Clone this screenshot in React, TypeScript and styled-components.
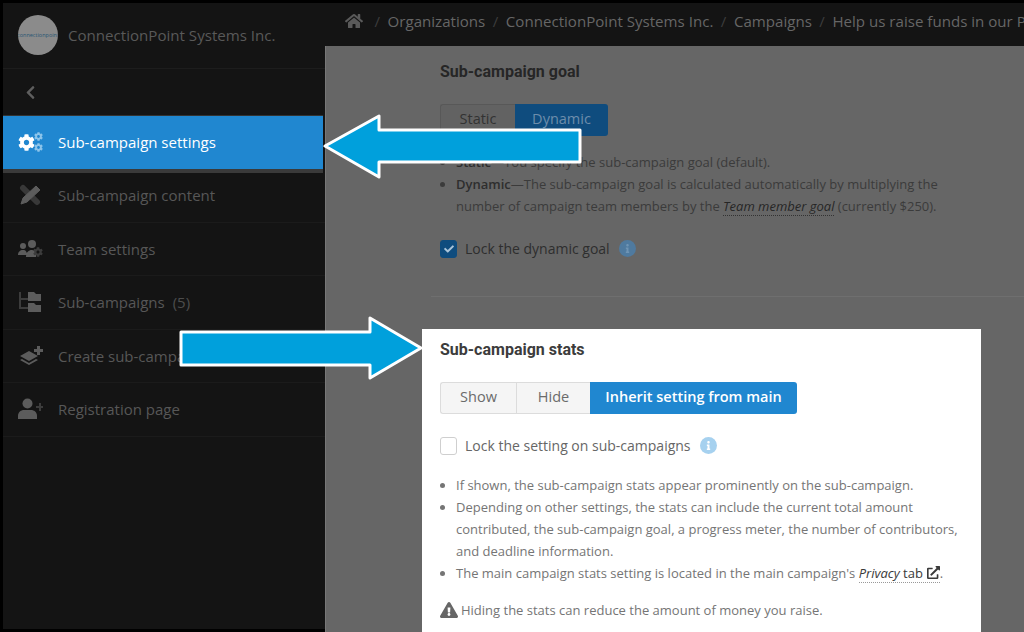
import React, { FC } from 'react';
import styled, { createGlobalStyle } from 'styled-components';
import { FaHome, FaExclamationTriangle, FaExternalLinkAlt, FaCheck, FaInfo, FaChevronLeft } from 'react-icons/fa';

const GlobalStyle = createGlobalStyle`
    html, body {
        margin: 0;
        padding: 0;
        background: #000;
    }
    body {
        font-family: "Open Sans", "Liberation Sans", sans-serif;
    }
`;

const Page = styled.div`
    position: relative;
    display: flex;
    width: 1024px;
    height: 632px;
    box-sizing: border-box;
    padding-top: 3px;
    overflow: hidden;
    background: #000;
`;

const Sidebar = styled.aside`
    width: 322px;
    margin-left: 3px;
    margin-bottom: 3px;
    background: #141414;
    flex-shrink: 0;
`;

const Brand = styled.div`
    display: flex;
    align-items: center;
    gap: 10px;
    height: 66px;
    padding: 0 0 1px 15px;
    box-sizing: border-box;
    border-bottom: 1px solid #1d1d1d;
    color: #595959;
    font-size: 15.1px;
`;

const Logo = styled.div`
    display: flex;
    align-items: center;
    justify-content: center;
    width: 40px;
    height: 40px;
    border-radius: 50%;
    background: #8b8b8b;
    color: #2a5674;
    font-size: 5.5px;
    white-space: nowrap;
    overflow: hidden;
`;

const BackRow = styled.div`
    display: flex;
    align-items: center;
    height: 47px;
    padding-left: 20px;
    color: #5e5e5e;
    font-size: 15px;
`;

const NavItem = styled.div<{ $active?: boolean }>`
    display: flex;
    align-items: center;
    gap: 15px;
    height: ${({ $active }) => ($active ? '53px' : '53.5px')};
    box-sizing: border-box;
    padding-left: 15px;
    padding-bottom: ${({ $active }) => ($active ? '2px' : '0')};
    margin-right: ${({ $active }) => ($active ? '2px' : '0')};
    font-size: 15px;
    color: ${({ $active }) => ($active ? '#fff' : '#575757')};
    background: ${({ $active }) => ($active ? '#2087d0' : 'transparent')};
    border-bottom: ${({ $active }) => ($active ? '0' : '1px solid #1b1b1b')};
    box-shadow: ${({ $active }) => ($active ? '0 4px 0 #3a3a3a, 0 -1px 0 #333' : 'none')};
`;

const Count = styled.span`
    margin-left: 8px;
    color: #4d4d4d;
`;

const IconBox = styled.svg`
    width: 25px;
    height: 22px;
    flex-shrink: 0;
`;

const Main = styled.main`
    flex: 1;
    display: flex;
    flex-direction: column;
    min-width: 0;
`;

const Breadcrumbs = styled.nav`
    display: flex;
    align-items: center;
    flex-shrink: 0;
    height: 43px;
    box-sizing: border-box;
    padding: 0 0 8px 20px;
    background: #141414;
    color: #666;
    font-size: 15.1px;
    white-space: nowrap;
    overflow: hidden;
    svg {
        flex-shrink: 0;
        font-size: 18px;
        margin-right: 4px;
        color: #5a5a5a;
    }
`;

const Slash = styled.span`
    margin: 0 7.5px;
    color: #3d3d3d;
`;

const Content = styled.div`
    flex: 1;
    display: flex;
    flex-direction: column;
    min-height: 0;
    background: #666;
    border-left: 1px solid #777;
`;

const Dimmed = styled.section`
    height: 251px;
    box-sizing: border-box;
    margin-left: 105px;
    padding: 15px 0 0 9px;
    border-bottom: 1px solid #6f6f6f;
`;

const Card = styled.section`
    flex: 1;
    width: 559px;
    margin-top: 32px;
    margin-left: 96px;
    padding: 10px 18px 0;
    box-sizing: border-box;
    background: #fff;
`;

const Heading = styled.h3<{ $dim?: boolean }>`
    margin: 0;
    font-family: Roboto, "Liberation Sans", sans-serif;
    font-size: 16px;
    font-weight: 700;
    line-height: 22px;
    color: ${({ $dim }) => ($dim ? '#262626' : '#3c3c3c')};
`;

const Toggle = styled.div`
    display: flex;
    margin-top: 21px;
`;

const ToggleButton = styled.div<{ $on?: boolean; $dim?: boolean; $w: number }>`
    display: flex;
    align-items: center;
    justify-content: center;
    width: ${({ $w }) => $w}px;
    height: 32px;
    box-sizing: border-box;
    padding-bottom: 3px;
    font-size: 14.5px;
    font-weight: ${({ $on, $dim }) => ($on && !$dim ? 600 : 400)};
    color: ${({ $on, $dim }) => ($on ? ($dim ? '#6d8dab' : '#fff') : $dim ? '#333' : '#6b6b6b')};
    background: ${({ $on, $dim }) => ($on ? ($dim ? '#0f4c7e' : '#2087d0') : $dim ? '#626262' : '#f5f5f5')};
    border: 1px solid ${({ $on, $dim }) => ($on ? 'transparent' : $dim ? '#585858' : '#dcdcdc')};
    border-right-width: ${({ $on }) => ($on ? '1px' : '0')};
    &:first-child {
        border-radius: 3px 0 0 3px;
    }
    &:last-child {
        border-radius: 0 3px 3px 0;
    }
`;

const Bullets = styled.ul<{ $dim?: boolean; $top: number }>`
    margin: ${({ $top }) => $top}px 0 0;
    padding: 0 0 0 16px;
    max-width: 507px;
    font-size: 13px;
    line-height: 22px;
    color: ${({ $dim }) => ($dim ? '#3b3b3b' : '#757575')};
`;

const Strong = styled.b`
    font-weight: 600;
    color: #2e2e2e;
`;

const Term = styled.span<{ $dim?: boolean }>`
    color: ${({ $dim }) => ($dim ? '#262626' : '#3a3a3a')};
    border-bottom: 1px dotted ${({ $dim }) => ($dim ? '#333' : '#999')};
    em {
        font-style: italic;
    }
    svg {
        font-size: 13px;
        margin-left: 4px;
        vertical-align: -1px;
    }
`;

const LockRow = styled.label<{ $dim?: boolean; $top: number }>`
    display: flex;
    align-items: center;
    gap: 8px;
    margin-top: ${({ $top }) => $top}px;
    font-size: 14px;
    color: ${({ $dim }) => ($dim ? '#2e2e2e' : '#666')};
`;

const CheckBox = styled.span<{ $on?: boolean }>`
    display: flex;
    align-items: center;
    justify-content: center;
    width: 17px;
    height: 18px;
    box-sizing: border-box;
    border-radius: 3px;
    color: #a9c4da;
    font-size: 10px;
    background: ${({ $on }) => ($on ? '#0f4c7e' : '#fff')};
    border: 1px solid ${({ $on }) => ($on ? '#0f4c7e' : '#cfcfcf')};
`;

const InfoDot = styled.span<{ $dim?: boolean }>`
    display: flex;
    align-items: center;
    justify-content: center;
    width: 17px;
    height: 17px;
    margin-left: 1px;
    border-radius: 50%;
    font-size: 9px;
    color: ${({ $dim }) => ($dim ? '#6f94b4' : '#fff')};
    background: ${({ $dim }) => ($dim ? '#4f7a9f' : '#a6d1ef')};
`;

const Warning = styled.p`
    display: flex;
    align-items: center;
    gap: 3px;
    margin: 15px 0 0;
    font-size: 13px;
    line-height: 22px;
    color: #757575;
    svg {
        font-size: 18px;
        color: #666;
    }
`;

const ArrowLayer = styled.svg`
    position: absolute;
    inset: 0;
    width: 1024px;
    height: 632px;
    pointer-events: none;
`;

const COG =
    'M487.4 315.7l-42.6-24.6c4.3-23.2 4.3-47 0-70.2l42.6-24.6c4.9-2.8 7.1-8.6 5.5-14-11.1-35.6-30-67.8-54.7-94.6-3.8-4.1-10-5.1-14.8-2.3L380.8 110c-17.9-15.4-38.5-27.3-60.8-35.1V25.8c0-5.6-3.9-10.5-9.4-11.7-36.7-8.2-74.3-7.8-109.2 0-5.5 1.2-9.4 6.1-9.4 11.7V75c-22.2 7.9-42.8 19.8-60.8 35.1L88.7 85.5c-4.9-2.8-11-1.9-14.8 2.3-24.7 26.7-43.6 58.9-54.7 94.6-1.7 5.4.6 11.2 5.5 14L67.3 221c-4.3 23.2-4.3 47 0 70.2l-42.6 24.6c-4.9 2.8-7.1 8.6-5.5 14 11.1 35.6 30 67.8 54.7 94.6 3.8 4.1 10 5.1 14.8 2.3l42.6-24.6c17.9 15.4 38.5 27.3 60.8 35.1v49.2c0 5.6 3.9 10.5 9.4 11.7 36.7 8.2 74.3 7.8 109.2 0 5.5-1.2 9.4-6.1 9.4-11.7v-49.2c22.2-7.9 42.8-19.8 60.8-35.1l42.6 24.6c4.9 2.8 11 1.9 14.8-2.3 24.7-26.7 43.6-58.9 54.7-94.6 1.5-5.5-.7-11.3-5.6-14.1zM256 336c-44.1 0-80-35.9-80-80s35.9-80 80-80 80 35.9 80 80-35.9 80-80 80z';

const Cog: FC<{ x: number; y: number; size: number; color: string }> = ({ x, y, size, color }) => (
    <path d={COG} fill={color} transform={`translate(${x} ${y}) scale(${size / 512})`} />
);

const SettingsIcon = () => (
    <IconBox viewBox="0 0 25 22">
        <Cog x={0} y={3} size={17} color="#fff" />
        <Cog x={16} y={1} size={9} color="#8cc4ea" />
        <Cog x={16} y={12} size={9} color="#8cc4ea" />
    </IconBox>
);

const ContentIcon = () => (
    <IconBox viewBox="0 0 25 22">
        <path d="M5 4l14 14" stroke="#383838" strokeWidth="6" strokeLinecap="round" />
        <path d="M18 2l4 4L9 18l-6 2 2-6z" fill="#5c5c5c" stroke="#5c5c5c" strokeWidth="1" strokeLinejoin="round" />
    </IconBox>
);

const TeamIcon = () => (
    <IconBox viewBox="0 0 25 22">
        <circle cx="5" cy="8" r="3" fill="#5c5c5c" />
        <circle cx="14" cy="6" r="4" fill="#5c5c5c" />
        <path d="M0 17c0-3 2-5 5-5s4 2 4 5zM8 19c0-4 2-7 6-7 2 0 3 1 4 2v5z" fill="#5c5c5c" />
        <Cog x={15} y={9} size={10} color="#3c3c3c" />
    </IconBox>
);

const TreeIcon = () => (
    <IconBox viewBox="0 0 25 22">
        <path d="M2 1v16h9M2 8h9" fill="none" stroke="#3c3c3c" strokeWidth="2" />
        <path d="M10 1h6l2 2h5v7H10zM10 12h6l2 2h5v7H10z" fill="#5c5c5c" />
    </IconBox>
);

const LayerPlusIcon = () => (
    <IconBox viewBox="0 0 25 22">
        <path d="M2 11l9-5 9 5-9 5z" fill="#5c5c5c" />
        <path d="M2 15l2-1 7 4 7-4 2 1-9 5z" fill="#5c5c5c" />
        <path d="M16 4h3V1h3v3h3v3h-3v3h-3V7h-3z" fill="#5c5c5c" />
    </IconBox>
);

const UserPlusIcon = () => (
    <IconBox viewBox="0 0 25 22">
        <circle cx="9.5" cy="5.5" r="5" fill="#5c5c5c" />
        <path d="M0 21v-3c0-4 3-6 6-6h7c3 0 6 2 6 6v3z" fill="#5c5c5c" />
        <path d="M18 8h3V5h2v3h3v2h-3v3h-2v-3h-3z" fill="#3c3c3c" />
    </IconBox>
);

const navItems = [
    { label: 'Sub-campaign content', icon: <ContentIcon /> },
    { label: 'Team settings', icon: <TeamIcon /> },
    { label: 'Sub-campaigns', icon: <TreeIcon />, count: 5 },
    { label: 'Create sub-campaign', icon: <LayerPlusIcon /> },
    { label: 'Registration page', icon: <UserPlusIcon /> },
];

const App: FC = () => {
    return (
        <Page>
            <GlobalStyle />
            <Sidebar>
                <Brand>
                    <Logo>connectionpoint</Logo>
                    ConnectionPoint Systems Inc.
                </Brand>
                <BackRow>
                    <FaChevronLeft />
                </BackRow>
                <NavItem $active>
                    <SettingsIcon />
                    Sub-campaign settings
                </NavItem>
                {navItems.map((item) => (
                    <NavItem key={item.label}>
                        {item.icon}
                        <span>
                            {item.label}
                            {item.count ? <Count>({item.count})</Count> : null}
                        </span>
                    </NavItem>
                ))}
            </Sidebar>

            <Main>
                <Breadcrumbs>
                    <FaHome />
                    <Slash>/</Slash>
                    Organizations
                    <Slash>/</Slash>
                    ConnectionPoint Systems Inc.
                    <Slash>/</Slash>
                    Campaigns
                    <Slash>/</Slash>
                    Help us raise funds in our Programs
                </Breadcrumbs>
                <Content>
                    <Dimmed>
                        <Heading $dim>Sub-campaign goal</Heading>
                        <Toggle>
                            <ToggleButton $dim $w={75}>Static</ToggleButton>
                            <ToggleButton $dim $on $w={93}>Dynamic</ToggleButton>
                        </Toggle>
                        <Bullets $dim $top={15}>
                            <li><Strong>Static</Strong>—You specify the sub-campaign goal (default).</li>
                            <li>
                                <Strong>Dynamic</Strong>—The sub-campaign goal is calculated automatically by multiplying the
                                number of campaign team members by the <Term $dim><em>Team member goal</em></Term> (currently $250).
                            </li>
                        </Bullets>
                        <LockRow $dim $top={22}>
                            <CheckBox $on><FaCheck /></CheckBox>
                            Lock the dynamic goal
                            <InfoDot $dim><FaInfo /></InfoDot>
                        </LockRow>
                    </Dimmed>
                    <Card>
                        <Heading>Sub-campaign stats</Heading>
                        <Toggle>
                            <ToggleButton $w={76}>Show</ToggleButton>
                            <ToggleButton $w={74}>Hide</ToggleButton>
                            <ToggleButton $on $w={207}>Inherit setting from main</ToggleButton>
                        </Toggle>
                        <LockRow $top={22}>
                            <CheckBox />
                            Lock the setting on sub-campaigns
                            <InfoDot><FaInfo /></InfoDot>
                        </LockRow>
                        <Bullets $top={19}>
                            <li>If shown, the sub-campaign stats appear prominently on the sub-campaign.</li>
                            <li>
                                Depending on other settings, the stats can include the current total amount
                                contributed, the sub-campaign goal, a progress meter, the number of contributors,
                                and deadline information.
                            </li>
                            <li>
                                The main campaign stats setting is located in the main campaign's{' '}
                                <Term><em>Privacy</em> tab<FaExternalLinkAlt /></Term>.
                            </li>
                        </Bullets>
                        <Warning>
                            <FaExclamationTriangle />
                            Hiding the stats can reduce the amount of money you raise.
                        </Warning>
                    </Card>
                </Content>
            </Main>

            <ArrowLayer viewBox="0 0 1024 632">
                <path
                    d="M325 146L379 116V130H580V162H379V177Z"
                    fill="#00a0dc"
                    stroke="#fff"
                    strokeWidth="3"
                    strokeLinejoin="round"
                />
                <path
                    d="M421 348L370 318V332H181V365H370V378Z"
                    fill="#00a0dc"
                    stroke="#fff"
                    strokeWidth="3"
                    strokeLinejoin="round"
                />
            </ArrowLayer>
        </Page>
    );
};

export default App;
